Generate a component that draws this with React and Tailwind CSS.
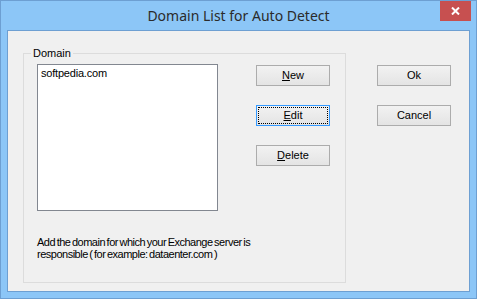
const ui = { fontFamily: '"Liberation Sans", Arial, sans-serif' };

function Btn({ children, focused }) {
  return (
    <div
      className={
        'w-[74px] h-[21px] border flex items-center justify-center bg-gradient-to-b from-[#f2f2f2] to-[#e4e4e4] text-[11px] text-black ' +
        (focused ? 'border-[#3399ff]' : 'border-[#acacac]')
      }
    >
      {focused ? (
        <div className="w-[70px] h-[17px] border border-dotted border-black flex items-center justify-center">
          {children}
        </div>
      ) : (
        children
      )}
    </div>
  );
}

export default function App() {
  return (
    <div
      className="relative w-[477px] h-[299px] border border-[#6d9fd2] bg-[#8cc6f7] flex flex-col"
      style={ui}
    >
      <div className="relative h-[29px] flex items-center justify-center">
        <span
          className="text-[14px] text-[#2b2b2b] pb-[1px]"
          style={{ fontFamily: '"Noto Sans", "Open Sans", sans-serif' }}
        >
          Domain List for Auto Detect
        </span>
        <div className="absolute top-0 right-[5px] w-[31px] h-[20px] bg-[#c75050] flex items-center justify-center">
          <svg width="9" height="8" viewBox="0 0 9 8">
            <path d="M1 0.5 L8 7.5 M8 0.5 L1 7.5" stroke="white" strokeWidth="2" />
          </svg>
        </div>
      </div>

      <div className="mx-[6px] h-[262px] border border-[#6d9fd2] bg-[#f0f0f0] flex pl-[15px] pt-[22px]">
        <div className="relative w-[323px] h-[230px] border border-[#dcdcdc] flex flex-col">
          <span className="absolute -top-[8px] left-[7px] px-[2px] bg-[#f0f0f0] text-[11px] leading-[14px] text-black">
            Domain
          </span>
          <div className="flex mt-[10px] ml-[13px]">
            <div className="w-[181px] h-[147px] border border-[#828790] bg-white px-[3px] pt-[1px] text-[11px] leading-[14px] text-black tracking-[-0.2px]">
              softpedia.com
            </div>
            <div className="ml-[38px] mt-[1px] flex flex-col gap-[19px]">
              <Btn>
                <span><u>N</u>ew</span>
              </Btn>
              <Btn focused>
                <span><u>E</u>dit</span>
              </Btn>
              <Btn>
                <span><u>D</u>elete</span>
              </Btn>
            </div>
          </div>
          <p className="ml-[13px] mt-[25px] text-[11px] leading-[12px] text-black tracking-[-0.5px] [word-spacing:-1px]">
            Add the domain for which your Exchange server is
            <br />
            responsible ( for example: dataenter.com )
          </p>
        </div>
        <div className="ml-[31px] mt-[12px] flex flex-col gap-[19px]">
          <Btn>Ok</Btn>
          <Btn>Cancel</Btn>
        </div>
      </div>
    </div>
  );
}
